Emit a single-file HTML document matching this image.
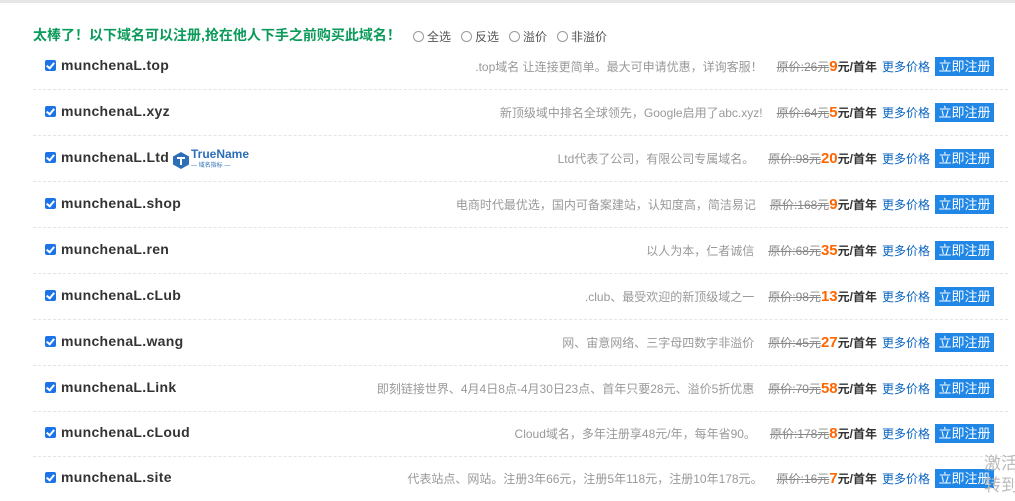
<!DOCTYPE html>
<html><head><meta charset="utf-8"><style>
body{margin:0;width:1015px;height:498px;overflow:hidden;background:#fff;font-family:"Liberation Sans","Noto Sans CJK SC",sans-serif;position:relative}
.top{position:absolute;left:0;top:0;width:1015px;height:3px;background:#e6e6e6}
.hd{position:absolute;left:33px;top:25px;font-size:14px;font-weight:bold;color:#0a9a5a;white-space:nowrap}
.opts{position:absolute;left:413px;top:28px;font-size:12px;color:#555;white-space:nowrap}
.opts span{margin-right:10px}
.opts i{display:inline-block;width:9px;height:9px;border:1px solid #999;border-radius:50%;vertical-align:-1px;margin-right:3px}
.row{position:absolute;left:33px;width:975px;height:46px;}
.row.sep{border-bottom:1px dashed #e4e4e4}
.cb{position:absolute;left:12px;top:17px;width:11px;height:11px;background:#1a73e8;border-radius:2px}
.cb:after{content:"";position:absolute;left:3px;top:1px;width:3px;height:6px;border:solid #fff;border-width:0 2px 2px 0;transform:rotate(40deg)}
.nm{position:absolute;left:28px;top:14px;font-size:14px;font-weight:bold;color:#333;letter-spacing:0.3px}
.r{position:absolute;right:14px;top:14px;display:flex;align-items:center;white-space:nowrap;height:19px}
.d{font-size:12px;color:#999;margin-right:14px}
.o{font-size:12px;color:#888;text-decoration:line-through}
.p{font-size:15px;font-weight:bold;color:#f60}
.y{font-size:12px;font-weight:bold;color:#333;margin-right:5px}
.m{font-size:12px;color:#0a63c0;margin-right:5px}
.b{background:#2187e7;color:#fff;font-size:13px;width:59px;height:19px;line-height:19px;text-align:center}
.tn{position:absolute;font-size:12px;font-weight:bold;color:#2a6fb8}
</style></head><body>
<div class="top"></div>
<div class="hd">太棒了！以下域名可以注册,抢在他人下手之前购买此域名！</div>
<div class="opts"><span><i></i>全选</span><span><i></i>反选</span><span><i></i>溢价</span><span><i></i>非溢价</span></div>

<div class="row sep" style="top:43px"><div class="cb"></div><div class="nm">munchenaL.top</div><div class="r"><span class="d">.top域名 让连接更简单。最大可申请优惠，详询客服！</span><span class="o">原价:26元</span><span class="p">9</span><span class="y">元/首年</span><span class="m">更多价格</span><span class="b">立即注册</span></div></div>
<div class="row sep" style="top:89px"><div class="cb"></div><div class="nm">munchenaL.xyz</div><div class="r"><span class="d">新顶级域中排名全球领先，Google启用了abc.xyz!</span><span class="o">原价:64元</span><span class="p">5</span><span class="y">元/首年</span><span class="m">更多价格</span><span class="b">立即注册</span></div></div>
<div class="row sep" style="top:135px"><div class="cb"></div><div class="nm">munchenaL.Ltd</div>
<div class="tn" style="left:140px;top:15px;display:flex;align-items:center"><svg width="16" height="17" viewBox="0 0 16 17"><polygon points="8,0 16,4.5 16,12.5 8,17 0,12.5 0,4.5" fill="#2a6fb8"/><rect x="4" y="5" width="8" height="2" fill="#fff"/><rect x="7" y="5" width="2" height="8" fill="#fff"/></svg><span style="margin-left:2px;line-height:9px"><span style="font-size:12px">TrueName</span><br><span style="font-size:6px;color:#2a6fb8;font-weight:normal">— 域名指标 —</span></span></div>
<div class="r"><span class="d">Ltd代表了公司，有限公司专属域名。</span><span class="o">原价:98元</span><span class="p">20</span><span class="y">元/首年</span><span class="m">更多价格</span><span class="b">立即注册</span></div></div>
<div class="row sep" style="top:181px"><div class="cb"></div><div class="nm">munchenaL.shop</div><div class="r"><span class="d">电商时代最优选，国内可备案建站，认知度高，简洁易记</span><span class="o">原价:168元</span><span class="p">9</span><span class="y">元/首年</span><span class="m">更多价格</span><span class="b">立即注册</span></div></div>
<div class="row sep" style="top:227px"><div class="cb"></div><div class="nm">munchenaL.ren</div><div class="r"><span class="d">以人为本，仁者诚信</span><span class="o">原价:68元</span><span class="p">35</span><span class="y">元/首年</span><span class="m">更多价格</span><span class="b">立即注册</span></div></div>
<div class="row sep" style="top:273px"><div class="cb"></div><div class="nm">munchenaL.cLub</div><div class="r"><span class="d">.club、最受欢迎的新顶级域之一</span><span class="o">原价:98元</span><span class="p">13</span><span class="y">元/首年</span><span class="m">更多价格</span><span class="b">立即注册</span></div></div>
<div class="row sep" style="top:319px"><div class="cb"></div><div class="nm">munchenaL.wang</div><div class="r"><span class="d">网、宙意网络、三字母四数字非溢价</span><span class="o">原价:45元</span><span class="p">27</span><span class="y">元/首年</span><span class="m">更多价格</span><span class="b">立即注册</span></div></div>
<div class="row sep" style="top:365px"><div class="cb"></div><div class="nm">munchenaL.Link</div><div class="r"><span class="d">即刻链接世界、4月4日8点-4月30日23点、首年只要28元、溢价5折优惠</span><span class="o">原价:70元</span><span class="p">58</span><span class="y">元/首年</span><span class="m">更多价格</span><span class="b">立即注册</span></div></div>
<div class="row sep" style="top:410px"><div class="cb"></div><div class="nm">munchenaL.cLoud</div><div class="r"><span class="d">Cloud域名，多年注册享48元/年，每年省90。</span><span class="o">原价:178元</span><span class="p">8</span><span class="y">元/首年</span><span class="m">更多价格</span><span class="b">立即注册</span></div></div>
<div class="row" style="top:455px"><div class="cb"></div><div class="nm">munchenaL.site</div><div class="r"><span class="d">代表站点、网站。注册3年66元，注册5年118元，注册10年178元。</span><span class="o">原价:16元</span><span class="p">7</span><span class="y">元/首年</span><span class="m">更多价格</span><span class="b">立即注册</span></div></div>
<div style="position:absolute;left:984px;top:453px;font-size:17px;color:#bbb;line-height:22px;white-space:nowrap;width:40px">激活<br>转到</div>
</body></html>
